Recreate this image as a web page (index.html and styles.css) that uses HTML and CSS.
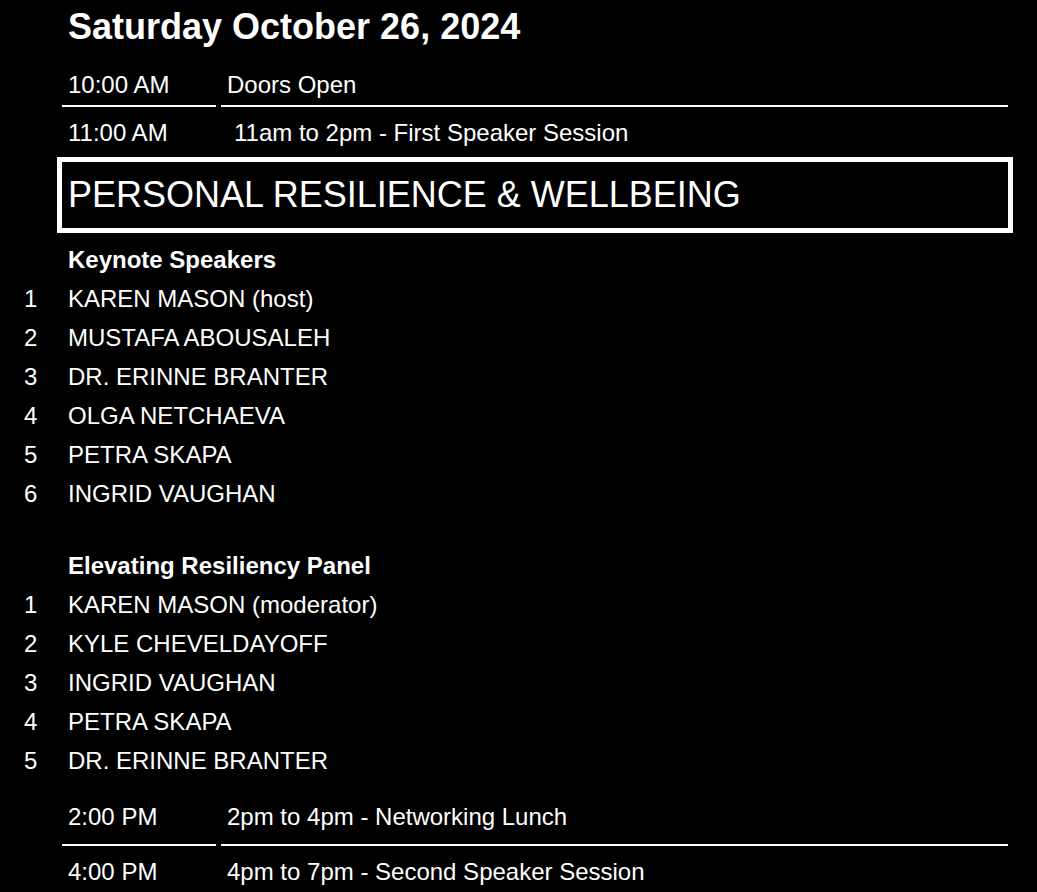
FILE: index.html
```html
<!DOCTYPE html>
<html lang="en">
<head>
<meta charset="utf-8">
<title>Saturday October 26, 2024</title>
<link rel="stylesheet" href="styles.css">
</head>
<body>
<div class="page">
  <h1 class="date">Saturday October 26, 2024</h1>

  <div class="slot slot-open">
    <div class="time ruled">10:00 AM</div>
    <div class="event ruled">Doors Open</div>
  </div>
  <div class="slot slot-first-session">
    <div class="time">11:00 AM</div>
    <div class="event event-indent">11am to 2pm - First Speaker Session</div>
  </div>

  <div class="session-title">PERSONAL RESILIENCE &amp; WELLBEING</div>

  <section class="group group-keynote">
    <div class="group-title">Keynote Speakers</div>
    <ol class="names">
      <li><span class="num">1</span><span class="name">KAREN MASON (host)</span></li>
      <li><span class="num">2</span><span class="name">MUSTAFA ABOUSALEH</span></li>
      <li><span class="num">3</span><span class="name">DR. ERINNE BRANTER</span></li>
      <li><span class="num">4</span><span class="name">OLGA NETCHAEVA</span></li>
      <li><span class="num">5</span><span class="name">PETRA SKAPA</span></li>
      <li><span class="num">6</span><span class="name">INGRID VAUGHAN</span></li>
    </ol>
  </section>

  <section class="group group-panel">
    <div class="group-title">Elevating Resiliency Panel</div>
    <ol class="names">
      <li><span class="num">1</span><span class="name">KAREN MASON (moderator)</span></li>
      <li><span class="num">2</span><span class="name">KYLE CHEVELDAYOFF</span></li>
      <li><span class="num">3</span><span class="name">INGRID VAUGHAN</span></li>
      <li><span class="num">4</span><span class="name">PETRA SKAPA</span></li>
      <li><span class="num">5</span><span class="name">DR. ERINNE BRANTER</span></li>
    </ol>
  </section>

  <div class="slot slot-lunch">
    <div class="time ruled">2:00 PM</div>
    <div class="event ruled">2pm to 4pm - Networking Lunch</div>
  </div>
  <div class="slot slot-second-session">
    <div class="time">4:00 PM</div>
    <div class="event">4pm to 7pm - Second Speaker Session</div>
  </div>
</div>
</body>
</html>
```

FILE: styles.css
```css
html, body {
  margin: 0;
  padding: 0;
  background: #000;
}

body {
  color: #fff;
  font-family: "Liberation Sans", Arial, sans-serif;
  min-height: 892px;
}

.page {
  padding-top: 7px;
}

.date {
  margin: 0 0 0 68px;
  font-size: 36px;
  line-height: 40px;
  font-weight: bold;
}

.slot {
  display: grid;
  grid-template-columns: 154px 787px;
  column-gap: 5px;
  margin-left: 62px;
  font-size: 24px;
  line-height: 28px;
}

.time,
.event {
  padding-left: 6px;
}

.event-indent {
  padding-left: 13px;
}

.ruled {
  border-bottom: 2px solid #fff;
}

.slot-open {
  margin-top: 24px;
}

.slot-open .time,
.slot-open .event {
  padding-bottom: 6px;
}

.slot-first-session .time,
.slot-first-session .event {
  padding-top: 12px;
}

.session-title {
  box-sizing: border-box;
  margin: 10px 0 0 57px;
  width: 956px;
  height: 76px;
  border: 5px solid #fff;
  padding-left: 6px;
  font-size: 36px;
  line-height: 66px;
}

.group-keynote {
  margin-top: 8px;
}

.group-panel {
  margin-top: 34px;
}

.group-title {
  padding-left: 68px;
  font-size: 24px;
  line-height: 38px;
  font-weight: bold;
}

.names {
  list-style: none;
  margin: 0;
  padding: 0;
}

.names li {
  display: grid;
  grid-template-columns: 44px 1fr;
  padding-left: 24px;
  font-size: 24px;
  line-height: 39px;
}

.slot-lunch {
  margin-top: 23px;
}

.slot-lunch .time,
.slot-lunch .event {
  padding-bottom: 13px;
}

.slot-second-session .time,
.slot-second-session .event {
  padding-top: 12px;
}
```
